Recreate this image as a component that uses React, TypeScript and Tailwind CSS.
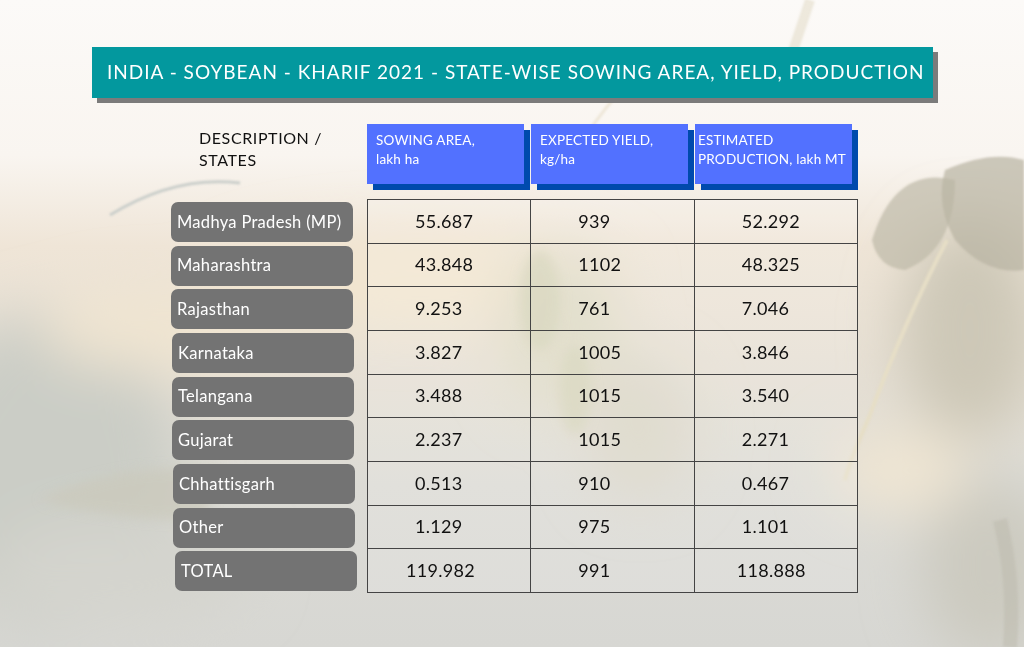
import React from "react"

type Row = {
  state: string
  area: string
  yieldKg: string
  prod: string
  shift: string
}

const rows: Row[] = [
  { state: "Madhya Pradesh (MP)", area: "55.687", yieldKg: "939", prod: "52.292", shift: "ml-0" },
  { state: "Maharashtra", area: "43.848", yieldKg: "1102", prod: "48.325", shift: "ml-0" },
  { state: "Rajasthan", area: "9.253", yieldKg: "761", prod: "7.046", shift: "ml-0" },
  { state: "Karnataka", area: "3.827", yieldKg: "1005", prod: "3.846", shift: "ml-[1px]" },
  { state: "Telangana", area: "3.488", yieldKg: "1015", prod: "3.540", shift: "ml-[1px]" },
  { state: "Gujarat", area: "2.237", yieldKg: "1015", prod: "2.271", shift: "ml-[1px]" },
  { state: "Chhattisgarh", area: "0.513", yieldKg: "910", prod: "0.467", shift: "ml-[2px]" },
  { state: "Other", area: "1.129", yieldKg: "975", prod: "1.101", shift: "ml-[2px]" },
  { state: "TOTAL", area: "119.982", yieldKg: "991", prod: "118.888", shift: "ml-[4px]" },
]

const headers = [
  { top: "SOWING AREA,", bottom: "lakh ha", pad: "pl-[9px]" },
  { top: "EXPECTED YIELD,", bottom: "kg/ha", pad: "pl-[9px]" },
  { top: "ESTIMATED", bottom: "PRODUCTION, lakh MT", pad: "pl-[3px]" },
]

function Backdrop() {
  return (
    <svg className="absolute inset-0 h-full w-full" viewBox="0 0 1024 647" preserveAspectRatio="none">
      <defs>
        <linearGradient id="base" x1="0" y1="0" x2="0" y2="1">
          <stop offset="0" stopColor="#fcfaf8" />
          <stop offset="0.24" stopColor="#f9f5f0" />
          <stop offset="0.38" stopColor="#efe5d7" />
          <stop offset="0.55" stopColor="#e7e0d4" />
          <stop offset="0.75" stopColor="#dcdbd5" />
          <stop offset="1" stopColor="#d7d7d3" />
        </linearGradient>
        <filter id="soft" x="-50%" y="-50%" width="200%" height="200%">
          <feGaussianBlur stdDeviation="28" />
        </filter>
        <filter id="mid" x="-50%" y="-50%" width="200%" height="200%">
          <feGaussianBlur stdDeviation="6" />
        </filter>
        <filter id="thin" x="-50%" y="-50%" width="200%" height="200%">
          <feGaussianBlur stdDeviation="1.2" />
        </filter>
      </defs>
      <rect width="1024" height="647" fill="url(#base)" />
      <g filter="url(#soft)">
        <ellipse cx="50" cy="470" rx="130" ry="160" fill="#cbcdc6" />
        <ellipse cx="160" cy="330" rx="120" ry="40" fill="#f0e5d1" />
        <ellipse cx="420" cy="280" rx="200" ry="45" fill="#f2e5cf" />
        <ellipse cx="560" cy="330" rx="60" ry="80" fill="#dedac5" />
        <ellipse cx="640" cy="430" rx="50" ry="70" fill="#dad6c6" />
        <ellipse cx="970" cy="330" rx="70" ry="110" fill="#cdc8b7" />
        <ellipse cx="990" cy="570" rx="70" ry="90" fill="#cccac0" />
        <ellipse cx="120" cy="570" rx="130" ry="55" fill="#d4d4ce" />
        <ellipse cx="900" cy="470" rx="70" ry="40" fill="#f0e6d3" />
      </g>
      <g filter="url(#mid)" opacity="0.7">
        <ellipse cx="540" cy="300" rx="20" ry="50" fill="#d3d1b5" />
        <ellipse cx="575" cy="390" rx="16" ry="45" fill="#d5d3b8" />
        <path d="M40 500 Q 120 460 230 470 L 200 520 Q 110 520 40 500 Z" fill="#cbc9bb" />
      </g>
      <g filter="url(#thin)">
        <path d="M872 240 Q 895 165 955 180 Q 955 250 905 270 Q 878 268 872 240 Z" fill="#bdb9a8" opacity="0.7" />
        <path d="M945 170 Q 990 150 1024 160 L 1024 270 Q 985 275 955 240 Q 935 205 945 170 Z" fill="#b8b4a3" opacity="0.7" />
        <path d="M947 240 Q 905 320 868 420 Q 850 460 845 480" stroke="#e6dec6" strokeWidth="4" fill="none" />
        <path d="M110 215 Q 175 175 240 183" stroke="#cbcfcb" strokeWidth="3" fill="none" />
        <path d="M810 0 Q 800 30 790 60" stroke="#e0d7c1" strokeWidth="10" fill="none" opacity="0.5" />
        <path d="M560 180 Q 590 120 640 70" stroke="#e6dcc6" strokeWidth="3" fill="none" opacity="0.6" />
        <path d="M1000 520 Q 1015 580 1010 647" stroke="#bbb8ab" strokeWidth="14" fill="none" opacity="0.45" />
      </g>
    </svg>
  )
}

export default function App() {
  return (
    <div className="relative h-[647px] w-[1024px] overflow-hidden font-['Lato',sans-serif]">
      <Backdrop />
      <div className="relative">
        <div className="ml-[92px] mt-[47px] flex h-[51px] w-[841px] items-center bg-[#03989e] pl-[15px] text-[19px] tracking-[1px] text-white shadow-[5px_5px_0_#7b7b7b]">
          INDIA - SOYBEAN - KHARIF 2021 - STATE-WISE SOWING AREA, YIELD, PRODUCTION
        </div>

        <div className="mt-[26px] flex">
          <div className="ml-[199px] w-[168px] pt-[3px] text-[16px] leading-[22px] tracking-[0.6px] text-[#111]">
            DESCRIPTION /<br />STATES
          </div>
          <div className="flex gap-[7px]">
            {headers.map((h) => (
              <div
                key={h.top}
                className={`${h.pad} h-[60px] w-[157px] whitespace-nowrap bg-[#5271ff] pt-[7px] text-[13.5px] leading-[19px] tracking-[0.2px] text-white shadow-[6px_6px_0_#004aad]`}
              >
                {h.top}
                <br />
                {h.bottom}
              </div>
            ))}
          </div>
        </div>

        <div className="mt-[15px] flex">
          <div className="ml-[171px] flex w-[196px] flex-col">
            {rows.map((r) => (
              <div key={r.state} className="h-[43.67px] pt-[3px]">
                <div
                  className={`${r.shift} flex h-[40px] w-[182px] items-center rounded-[7px] bg-[#737373] pl-[6px] text-[16.5px] tracking-[0.3px] text-white`}
                >
                  {r.state}
                </div>
              </div>
            ))}
          </div>
          <table className="w-[491px] table-fixed border-collapse border border-[#6a6a6a] bg-white/15 text-[18px] tracking-[0.3px] text-[#111]">
            <tbody>
              {rows.map((r, i) => {
                const last = i === rows.length - 1
                return (
                  <tr key={r.state} className="h-[43.67px]">
                    <td className={`${last ? "pl-[38px]" : "pl-[47px]"} border border-[#444]`}>{r.area}</td>
                    <td className="border border-[#444] pl-[47px]">{r.yieldKg}</td>
                    <td className={`${last ? "pl-[42px]" : "pl-[47px]"} border border-[#444]`}>{r.prod}</td>
                  </tr>
                )
              })}
            </tbody>
          </table>
        </div>
      </div>
    </div>
  )
}
